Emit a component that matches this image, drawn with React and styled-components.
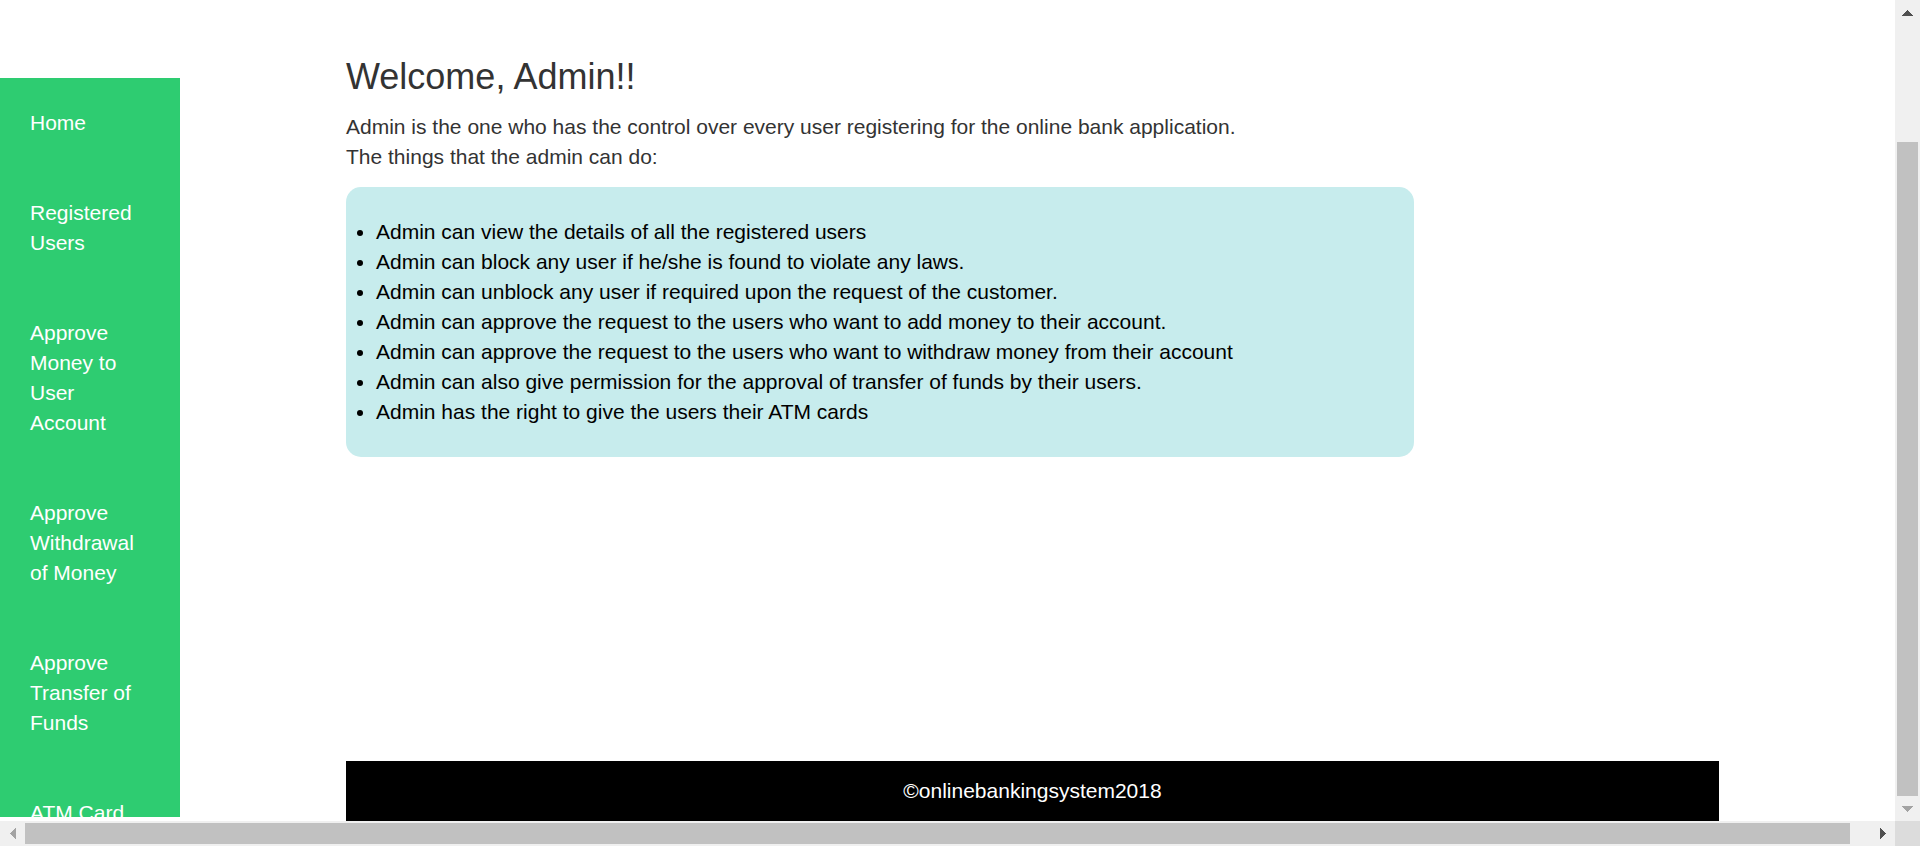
import React from "react";
import styled, { createGlobalStyle } from "styled-components";

const GlobalStyle = createGlobalStyle`
  *, *::before, *::after { box-sizing: border-box; }
  body {
    margin: 0;
    background: #fff;
    color: #333;
    font-family: "Liberation Sans", Arial, sans-serif;
    font-size: 21px;
    line-height: 30px;
  }
`;

const Frame = styled.div`
  display: grid;
  grid-template: minmax(0, 1fr) 25px / minmax(0, 1fr) 25px;
  height: 100vh;
`;

const Page = styled.div`
  display: flex;
  min-height: 0;
  overflow: hidden;
`;

const Sidebar = styled.nav`
  flex: 0 0 180px;
  margin: 78px 0 4px;
  overflow: hidden;
  background: #2ecc71;
`;

const NavLink = styled.a`
  display: block;
  padding: 30px;
  color: #fff;
  text-decoration: none;
`;

const Main = styled.main`
  flex: 1;
  display: flex;
  flex-direction: column;
  margin: 0 176px 0 166px;
  padding-top: 57px;
`;

const Title = styled.h1`
  margin: 0 0 15px;
  font-size: 36px;
  font-weight: 400;
  line-height: 40px;
`;

const Intro = styled.p`
  margin: 0 0 15px;
`;

const Duties = styled.ul`
  margin: 0 305px 0 0;
  padding: 30px;
  border-radius: 15px;
  background: #c7eced;
  color: #000;
`;

const Footer = styled.footer`
  margin-top: auto;
  padding: 15px;
  background: #000;
  color: #fff;
  text-align: center;
`;

const Scrollbar = styled.div`
  display: flex;
  flex-direction: ${(p) => (p.$vertical ? "column" : "row")};
  padding: ${(p) => (p.$vertical ? "0 2px" : "2px 0")};
  background: #f0f0f0;
`;

const Thumb = styled.div`
  flex: 1;
  margin: ${(p) => p.$margin};
  background: #c1c1c1;
`;

const ArrowButton = styled.button`
  flex: 0 0 25px;
  display: flex;
  align-items: center;
  justify-content: center;
  padding: 0;
  border: 0;
  background: transparent;
  color: ${(p) => (p.$faded ? "#a3a3a3" : "#505050")};
`;

const Corner = styled.div`
  background: #dcdcdc;
`;

const arrows = {
  up: { w: 11, h: 6, d: "M5 0h1v1h1v1h1v1h1v1h1v1h1v1H0V5h1V4h1V3h1V2h1V1h1z" },
  down: { w: 11, h: 6, d: "M0 0h11v1h-1v1H9v1H8v1H7v1H6v1H5V5H4V4H3V3H2V2H1V1H0z" },
  left: { w: 6, h: 11, d: "M6 0v11H5v-1H4V9H3V8H2V7H1V6H0V5h1V4h1V3h1V2h1V1h1V0z" },
  right: { w: 6, h: 11, d: "M0 0h1v1h1v1h1v1h1v1h1v1h1v1H5v1H4v1H3v1H2v1H1v1H0z" },
};

function Arrow({ direction, faded }) {
  const { w, h, d } = arrows[direction];
  return (
    <ArrowButton type="button" aria-label={`Scroll ${direction}`} $faded={faded}>
      <svg width={w} height={h} viewBox={`0 0 ${w} ${h}`} fill="currentColor" aria-hidden="true">
        <path d={d} />
      </svg>
    </ArrowButton>
  );
}

const links = [
  "Home",
  "Registered Users",
  "Approve Money to User Account",
  "Approve Withdrawal of Money",
  "Approve Transfer of Funds",
  "ATM Card",
];

const duties = [
  "Admin can view the details of all the registered users",
  "Admin can block any user if he/she is found to violate any laws.",
  "Admin can unblock any user if required upon the request of the customer.",
  "Admin can approve the request to the users who want to add money to their account.",
  "Admin can approve the request to the users who want to withdraw money from their account",
  "Admin can also give permission for the approval of transfer of funds by their users.",
  "Admin has the right to give the users their ATM cards",
];

export default function App() {
  return (
    <>
      <GlobalStyle />
      <Frame>
        <Page>
          <Sidebar>
            {links.map((label) => (
              <NavLink key={label} href="#">{label}</NavLink>
            ))}
          </Sidebar>
          <Main>
            <Title>Welcome, Admin!!</Title>
            <Intro>
              Admin is the one who has the control over every user registering for the online bank application.
              <br />
              The things that the admin can do:
            </Intro>
            <Duties>
              {duties.map((duty) => (
                <li key={duty}>{duty}</li>
              ))}
            </Duties>
            <Footer>©onlinebankingsystem2018</Footer>
          </Main>
        </Page>
        <Scrollbar $vertical>
          <Arrow direction="up" />
          <Thumb $margin="117px 0 0" />
          <Arrow direction="down" faded />
        </Scrollbar>
        <Scrollbar>
          <Arrow direction="left" faded />
          <Thumb $margin="0 20px 0 0" />
          <Arrow direction="right" />
        </Scrollbar>
        <Corner />
      </Frame>
    </>
  );
}
